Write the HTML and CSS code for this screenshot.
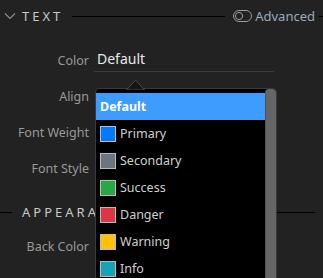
FILE: index.html
```html
<!DOCTYPE html>
<html lang="en">
<head>
  <meta charset="UTF-8">
  <title>Text properties</title>
  <link rel="stylesheet" href="styles.css">
</head>
<body>
  <div class="panel">
    <div class="section-head">
      <svg class="chevron" width="12" height="8" viewBox="0 0 12 8"><polyline points="1,1.5 6,6.5 11,1.5" fill="none" stroke="#8a8a8a" stroke-width="1.2"/></svg>
      <span class="section-title">TEXT</span>
      <span class="rule"></span>
      <span class="advanced">
        <svg width="19" height="12" viewBox="0 0 19 12"><rect x="0.5" y="0.5" width="18" height="11" rx="5.5" fill="none" stroke="#9a9a9a"/><circle cx="6" cy="6" r="3.6" fill="none" stroke="#9a9a9a"/></svg>
        Advanced
      </span>
      <span class="rule tail"></span>
    </div>

    <div class="props">
      <div class="prop">
        <div class="prop-label">Color</div>
        <div class="prop-value">Default</div>
      </div>
      <div class="prop">
        <div class="prop-label">Align</div>
      </div>
      <div class="prop">
        <div class="prop-label">Font Weight</div>
      </div>
      <div class="prop">
        <div class="prop-label">Font Style</div>
      </div>
    </div>

    <div class="section-head second">
      <span class="rule lead"></span>
      <span class="section-title">APPEARANCE</span>
      <span class="rule"></span>
    </div>
    <div class="props tight">
      <div class="prop">
        <div class="prop-label">Back Color</div>
      </div>
    </div>

    <!-- open color dropdown -->
    <div class="dropdown">
      <svg class="dropdown-arrow" width="19" height="11" viewBox="0 0 19 11"><polygon points="0.5,11 9.5,1 18.5,11" fill="#141414" stroke="#4a4a4a"/></svg>
      <div class="dropdown-list">
        <div class="option selected">Default</div>
        <div class="option"><span class="swatch primary"></span>Primary</div>
        <div class="option"><span class="swatch secondary"></span>Secondary</div>
        <div class="option"><span class="swatch success"></span>Success</div>
        <div class="option"><span class="swatch danger"></span>Danger</div>
        <div class="option"><span class="swatch warning"></span>Warning</div>
        <div class="option"><span class="swatch info"></span>Info</div>
      </div>
      <div class="scrollbar"></div>
    </div>
  </div>
</body>
</html>
```

FILE: styles.css
```css
body {
  margin: 0;
  background-color: #222;
  font-family: 'Noto Sans', sans-serif;
  font-size: 12px;
  overflow: hidden;
}
.panel {
  position: relative;
  height: 278px;
  overflow: hidden;
}
.section-head {
  display: flex;
  align-items: center;
  height: 32px;
  padding-left: 4px;
}
.section-head.second {
  margin-top: 10px;
  padding-left: 0;
}
.chevron {
  margin-right: 6px;
}
.section-title {
  color: #c8c8c8;
  font-size: 13px;
  letter-spacing: 3px;
}
.rule {
  flex: 1;
  height: 1px;
  background-color: #000;
  margin: 0 8px 0 9px;
}
.rule.lead {
  flex: none;
  width: 12px;
  margin: 0 10px 0 0;
}
.rule.tail {
  flex: none;
  width: 4px;
  margin: 0 0 0 4px;
}
.advanced {
  display: flex;
  align-items: center;
  gap: 3px;
  color: #9aaabb;
  font-size: 13px;
}
.props {
  margin-top: 10px;
}
.props.tight {
  margin-top: 0;
}
.prop {
  display: flex;
  align-items: center;
  height: 36px;
}
.prop-label {
  width: 89px;
  text-align: right;
  color: #999;
  font-size: 12.5px;
}
.prop-value {
  flex: 1;
  margin: 0 49px 0 5px;
  padding: 0 0 2px 3px;
  color: #e8e8e8;
  font-size: 14px;
  line-height: 20px;
  border-bottom: 1px solid #3c3c3c;
}
.dropdown {
  position: absolute;
  left: 95px;
  top: 88px;
  width: 180px;
  bottom: -20px;
  display: flex;
  background-color: #000;
  border: 1px solid #3a3a3a;
  border-radius: 4px 4px 0 0;
}
.dropdown-arrow {
  position: absolute;
  left: 30px;
  top: -10px;
}
.dropdown-list {
  flex: 1;
  padding-top: 4px;
}
.option {
  display: flex;
  align-items: center;
  height: 27px;
  padding-left: 4px;
  color: #cfcfcf;
  font-size: 12.5px;
}
.option.selected {
  background-color: #3f9cff;
  color: #fff;
  font-weight: bold;
}
.swatch {
  width: 14px;
  height: 14px;
  border: 1px solid #bbb;
  margin-right: 4px;
}
.swatch.primary { background-color: #007bff; }
.swatch.secondary { background-color: #6c757d; }
.swatch.success { background-color: #28a745; }
.swatch.danger { background-color: #dc3545; }
.swatch.warning { background-color: #ffc107; }
.swatch.info { background-color: #17a2b8; }
.scrollbar {
  width: 10px;
  background-color: #666;
  border-left: 1px solid #555;
  border-radius: 4px 4px 0 0;
}
```
